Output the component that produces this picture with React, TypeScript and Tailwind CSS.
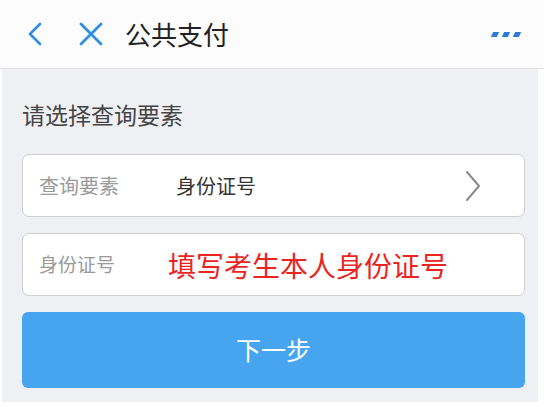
import React from "react";

const font = { fontFamily: '"Noto Sans CJK SC", "Noto Sans", sans-serif' };

export default function App() {
  return (
    <div className="w-[544px] h-[407px] bg-white flex flex-col overflow-hidden" style={font}>
      <div className="h-[69px] bg-[#fcfcfc] flex items-center border-b border-[#e2e2e4]">
        <svg width="20" height="26" viewBox="0 0 20 26" className="ml-[25px]">
          <path d="M15 3 L5 13 L15 23" fill="none" stroke="#2f8ee0" strokeWidth="2.6" strokeLinecap="round" strokeLinejoin="round" />
        </svg>
        <svg width="26" height="26" viewBox="0 0 26 26" className="ml-[33px]">
          <path d="M3 3 L23 23 M23 3 L3 23" fill="none" stroke="#2f8ee0" strokeWidth="2.8" strokeLinecap="round" />
        </svg>
        <span className="ml-[21px] text-[26px] text-[#222] leading-none">公共支付</span>
        <div className="ml-auto mr-[24px] flex items-center gap-[5px]">
          {[0, 1, 2].map((i) => (
            <span key={i} className="block w-[6px] h-[5px] bg-[#2d7bd0] skew-x-[-25deg]" />
          ))}
        </div>
      </div>
      <div className="ml-[2px] w-[536px] h-[333px] bg-[#eff0f4] flex flex-col pl-[20px] pr-[13px]">
        <div className="mt-[34px] text-[23px] leading-none text-[#444]">请选择查询要素</div>
        <div className="mt-[28px] h-[63px] bg-white border border-[#cfcfd2] rounded-[7px] flex items-center pl-[16px] pr-[42px]">
          <span className="text-[20px] text-[#9a9a9a] w-[137px]">查询要素</span>
          <span className="text-[20px] text-[#333]">身份证号</span>
          <svg width="18" height="32" viewBox="0 0 18 32" className="ml-auto">
            <path d="M3 2 L15 16 L3 30" fill="none" stroke="#8a8a8a" strokeWidth="2" strokeLinecap="round" strokeLinejoin="round" />
          </svg>
        </div>
        <div className="mt-[16px] h-[63px] bg-white border border-[#cfcfd2] rounded-[7px] flex items-center pl-[16px]">
          <span className="text-[19px] text-[#9a9a9a] w-[129px]">身份证号</span>
          <span className="text-[28px] text-[#e8251f] leading-none">填写考生本人身份证号</span>
        </div>
        <div className="mt-[16px] h-[76px] bg-[#47a5ef] rounded-[6px] flex items-center justify-center">
          <span className="text-[25px] text-white">下一步</span>
        </div>
      </div>
    </div>
  );
}
